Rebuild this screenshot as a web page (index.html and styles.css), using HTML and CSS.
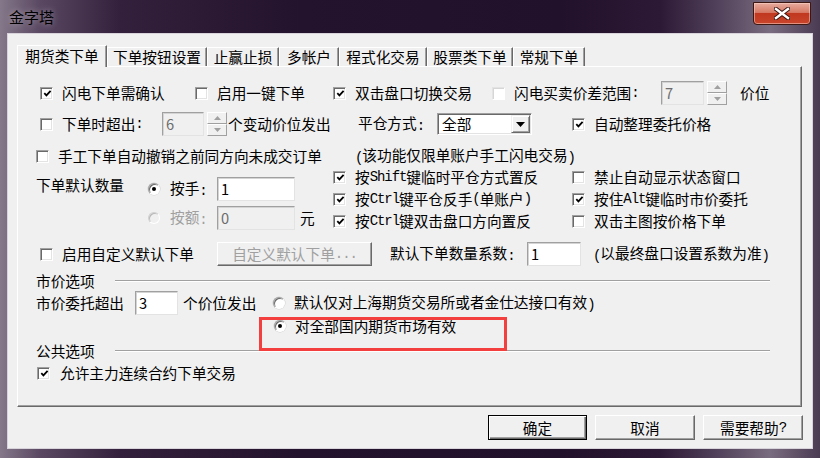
FILE: index.html
```html
<!DOCTYPE html>
<html lang="zh-CN">
<head>
  <meta charset="UTF-8" />
  <title>金字塔</title>
  <link rel="stylesheet" href="styles.css">
</head>
<body>
  <div class="window">
    <div class="titlebar">
      <span class="title">金字塔</span>
      <div class="close">
        <svg width="16" height="13" viewBox="0 0 16 13">
          <path d="M2 2 L14 11 M14 2 L2 11" stroke="#3a1410" stroke-width="4.4" stroke-linecap="square" fill="none"/>
          <path d="M2 2 L14 11 M14 2 L2 11" stroke="#fff" stroke-width="2.4" stroke-linecap="square" fill="none"/>
        </svg>
      </div>
    </div>

    <div class="client">
      <div class="tabs">
        <div class="tab active">期货类下单</div>
        <div class="tab">下单按钮设置</div>
        <div class="tab">止赢止损</div>
        <div class="tab">多帐户</div>
        <div class="tab">程式化交易</div>
        <div class="tab">股票类下单</div>
        <div class="tab">常规下单</div>
      </div>

      <div class="panel">
        <div class="row r1">
          <label class="chk w155"><span class="cb"><svg width="9" height="9" viewBox="0 0 9 9"><path d="M1.3 4.2 L3.4 6.4 L7.6 1.8" fill="none" stroke="#000" stroke-width="1.8"/></svg></span>闪电下单需确认</label>
          <label class="chk w138"><span class="cb"></span>启用一键下单</label>
          <label class="chk w159"><span class="cb"><svg width="9" height="9" viewBox="0 0 9 9"><path d="M1.3 4.2 L3.4 6.4 L7.6 1.8" fill="none" stroke="#000" stroke-width="1.8"/></svg></span>双击盘口切换交易</label>
          <label class="chk w169"><span class="cb lite"></span>闪电买卖价差范围<span class="en">:</span></label>
          <div class="spin">
            <span class="edit off w43">7</span>
            <span class="spinbtns">
              <span><svg width="7" height="4" viewBox="0 0 7 4"><path d="M0 4 L3.5 0 L7 4Z" fill="#a0a0a0"/></svg></span>
              <span><svg width="7" height="4" viewBox="0 0 7 4"><path d="M0 0 L3.5 4 L7 0Z" fill="#a0a0a0"/></svg></span>
            </span>
          </div>
          <span class="unit">价位</span>
        </div>

        <div class="row r2">
          <label class="chk w122"><span class="cb"></span>下单时超出<span class="en">:</span></label>
          <div class="spin w66">
            <span class="edit off w42">6</span>
            <span class="spinbtns">
              <span><svg width="7" height="4" viewBox="0 0 7 4"><path d="M0 4 L3.5 0 L7 4Z" fill="#a0a0a0"/></svg></span>
              <span><svg width="7" height="4" viewBox="0 0 7 4"><path d="M0 0 L3.5 4 L7 0Z" fill="#a0a0a0"/></svg></span>
            </span>
          </div>
          <span class="w130">个变动价位发出</span>
          <span class="w79">平仓方式<span class="en">:</span></span>
          <div class="combo">
            <span class="val">全部</span>
            <span class="drop"><svg width="9" height="5" viewBox="0 0 9 5"><path d="M0 0 L9 0 L4.5 5Z" fill="#000"/></svg></span>
          </div>
          <label class="chk ml40"><span class="cb"><svg width="9" height="9" viewBox="0 0 9 9"><path d="M1.3 4.2 L3.4 6.4 L7.6 1.8" fill="none" stroke="#000" stroke-width="1.8"/></svg></span>自动整理委托价格</label>
        </div>

        <div class="row r3">
          <label class="chk w319"><span class="cb"></span>手工下单自动撤销之前同方向未成交订单</label>
          <span><span class="en">(</span>该功能仅限单账户手工闪电交易<span class="en">)</span></span>
        </div>

        <div class="qty">
          <div class="qty-left">
            <span class="qty-label">下单默认数量</span>
            <div class="qty-opts">
              <div class="row h24">
                <span class="rd on"></span>
                <span class="w47">按手<span class="en">:</span></span>
                <span class="edit w78">1</span>
              </div>
              <div class="row h24 mt5">
                <span class="rd dis"></span>
                <span class="w47 grey">按额<span class="en">:</span></span>
                <span class="edit off w78">0</span>
                <span class="yuan">元</span>
              </div>
            </div>
          </div>
          <div class="qty-right">
            <div class="row h22">
              <label class="chk w239"><span class="cb"><svg width="9" height="9" viewBox="0 0 9 9"><path d="M1.3 4.2 L3.4 6.4 L7.6 1.8" fill="none" stroke="#000" stroke-width="1.8"/></svg></span>按<span class="en">Shift</span>键临时平仓方式置反</label>
              <label class="chk"><span class="cb"></span>禁止自动显示状态窗口</label>
            </div>
            <div class="row h22">
              <label class="chk w239"><span class="cb"><svg width="9" height="9" viewBox="0 0 9 9"><path d="M1.3 4.2 L3.4 6.4 L7.6 1.8" fill="none" stroke="#000" stroke-width="1.8"/></svg></span>按<span class="en">Ctrl</span>键平仓反手<span class="en">(</span>单账户<span class="en">)</span></label>
              <label class="chk"><span class="cb"><svg width="9" height="9" viewBox="0 0 9 9"><path d="M1.3 4.2 L3.4 6.4 L7.6 1.8" fill="none" stroke="#000" stroke-width="1.8"/></svg></span>按住<span class="en">Alt</span>键临时市价委托</label>
            </div>
            <div class="row h22">
              <label class="chk w239"><span class="cb"><svg width="9" height="9" viewBox="0 0 9 9"><path d="M1.3 4.2 L3.4 6.4 L7.6 1.8" fill="none" stroke="#000" stroke-width="1.8"/></svg></span>按<span class="en">Ctrl</span>键双击盘口方向置反</label>
              <label class="chk"><span class="cb"></span>双击主图按价格下单</label>
            </div>
          </div>
        </div>

        <div class="row r7">
          <label class="chk w177"><span class="cb"></span>启用自定义默认下单</label>
          <span class="btn dis w155">自定义默认下单<span class="en">...</span></span>
          <span class="w137 ml18">默认下单数量系数<span class="en">:</span></span>
          <span class="edit w54">1</span>
          <span class="ml12"><span class="en">(</span>以最终盘口设置系数为准<span class="en">)</span></span>
        </div>

        <div class="group g1">
          <span class="w79">市价选项</span>
          <span class="gline"></span>
        </div>

        <div class="row r8">
          <span class="w99">市价委托超出</span>
          <span class="edit w43">3</span>
          <span class="w90 ml5">个价位发出</span>
          <span class="rd tight"></span>
          <span>默认仅对上海期货交易所或者金仕达接口有效<span class="en">)</span></span>
        </div>

        <div class="row r9">
          <span class="rd on tight"></span>
          <span>对全部国内期货市场有效</span>
        </div>

        <div class="group g2">
          <span class="w79">公共选项</span>
          <span class="gline"></span>
        </div>

        <div class="row r10">
          <label class="chk"><span class="cb wide"><svg width="9" height="9" viewBox="0 0 9 9"><path d="M1.3 4.2 L3.4 6.4 L7.6 1.8" fill="none" stroke="#000" stroke-width="1.8"/></svg></span>允许主力连续合约下单交易</label>
        </div>
      </div>

      <div class="footer">
        <span class="btn def">确定</span>
        <span class="btn">取消</span>
        <span class="btn">需要帮助<span class="en">?</span></span>
      </div>
    </div>
  </div>

  <div class="mark"></div>
</body>
</html>
```

FILE: styles.css
```css
* {
  box-sizing: border-box;
}

html, body {
  margin: 0;
  padding: 0;
}

body {
  width: 820px;
  height: 458px;
  overflow: hidden;
  position: relative;
  font-family: "Noto Sans CJK SC", "Noto Sans CJK JP", sans-serif;
  font-size: 14.67px;
  line-height: 18px;
  color: #000;
  background: linear-gradient(90deg, #85788a 0, #5a4862 40px, #33203c 120px, #24132c 300px, #22112a 560px, #2c1936 660px, #5a4a62 730px, #7a6c80 770px, #4a3a52 820px);
}

/* half-width latin, same advance as the dialog font */
.en {
  font-family: "Liberation Mono", monospace;
  font-size: 14px;
  letter-spacing: -1.07px;
  vertical-align: -1px;
}

/* window frame */
.window {
  height: 458px;
  display: flex;
  flex-direction: column;
}

.titlebar {
  height: 34px;
  display: flex;
  justify-content: space-between;
  align-items: flex-start;
}

.title {
  margin: 8px 0 0 9px;
  font-size: 15px;
  text-shadow: 0 0 6px rgba(255, 255, 255, 0.45);
}

.close {
  width: 58px;
  height: 23px;
  margin: 2px 9px 0 0;
  border: 1px solid #3d1712;
  border-radius: 0 0 4px 4px;
  background: linear-gradient(#e7ab9d 0, #d67a66 45%, #c0381f 50%, #c9452b 100%);
  box-shadow: inset 0 0 0 1px rgba(255, 220, 210, 0.5);
  display: flex;
  align-items: center;
  justify-content: center;
}

.client {
  margin: 0 8px;
  height: 414px;
  background: #f0f0f0;
  padding: 11px 0 0 9px;
  box-shadow: 0 0 0 1px #d8d3da;
}

/* tabs */
.tabs {
  display: flex;
  align-items: flex-end;
  height: 21px;
  position: relative;
  z-index: 1;
}

.tab {
  height: 19px;
  line-height: 18px;
  text-align: center;
  white-space: nowrap;
  border-top: 1px solid #fff;
  border-left: 1px solid #fff;
  border-right: 1px solid #696969;
  box-shadow: inset -1px 0 #a0a0a0;
}

.tab.active {
  height: 22px;
  margin-bottom: -1px;
  padding-top: 1px;
  background: #f0f0f0;
}

.tab:nth-child(1) { width: 90px; }
.tab:nth-child(2) { width: 100px; }
.tab:nth-child(3) { width: 72px; }
.tab:nth-child(4) { width: 60px; }
.tab:nth-child(5) { width: 88px; }
.tab:nth-child(6) { width: 86px; }
.tab:nth-child(7) { width: 72px; }

.panel {
  width: 785px;
  height: 341px;
  border: 1px solid;
  border-color: #fff #696969 #696969 #fff;
  box-shadow: inset -1px -1px #a0a0a0;
}

/* rows */
.row {
  display: flex;
  align-items: center;
  white-space: nowrap;
}

.row > span,
.row > label {
  flex: none;
}

.r1 { height: 24px; margin-top: 14px; padding-left: 22px; }
.r2 { height: 24px; margin-top: 7px; padding-left: 22px; }
.r3 { height: 18px; margin-top: 11px; padding-left: 18px; }
.r7 { height: 24px; margin-top: 10px; padding-left: 22px; }
.r8 { height: 24px; margin-top: 1px; padding-left: 18px; }
.r9 { height: 18px; margin-top: 2px; padding-left: 256px; }
.r10 { height: 18px; margin-top: 4px; padding-left: 19px; }

.h22 { height: 22px; }
.h24 { height: 24px; }
.mt5 { margin-top: 5px; }
.ml5 { margin-left: 5px; }
.ml12 { margin-left: 12px; }
.ml18 { margin-left: 18px; }
.ml40 { margin-left: 40px; }

.w42 { width: 42px; }
.w43 { width: 43px; }
.w47 { width: 47px; }
.w54 { width: 54px; }
.w66 { width: 66px; }
.w78 { width: 78px; }
.w79 { width: 79px; }
.w90 { width: 90px; }
.w99 { width: 99px; }
.w122 { width: 122px; }
.w130 { width: 130px; }
.w137 { width: 137px; }
.w138 { width: 138px; }
.w155 { width: 155px; }
.w159 { width: 159px; }
.w169 { width: 169px; }
.w177 { width: 177px; }
.w239 { width: 239px; }
.w319 { width: 319px; }

.grey { color: #a0a0a0; }

/* checkbox */
.chk {
  display: flex;
  align-items: center;
  white-space: nowrap;
  flex: none;
}

.cb {
  width: 13px;
  height: 13px;
  flex: none;
  margin-right: 9px;
  background: #fff;
  border: 1px solid;
  border-color: #a0a0a0 #fff #fff #a0a0a0;
  box-shadow: inset 1px 1px #696969, inset -1px -1px #e3e3e3;
  display: flex;
  align-items: center;
  justify-content: center;
  padding: 1px 0 0 1px;
}

.cb.lite {
  border-color: #e3e3e3 #fff #fff #e3e3e3;
  box-shadow: inset 1px 1px #d6d6d6;
}

.cb.wide {
  margin-right: 10px;
}

/* radio */
.rd {
  width: 12px;
  height: 12px;
  flex: none;
  margin-right: 10px;
  border-radius: 50%;
  background: #fff;
  border: 1px solid;
  border-color: #a0a0a0 #fff #fff #a0a0a0;
  box-shadow: inset 1px 1px #696969, 0 0 0 0.5px #d0d0d0;
  position: relative;
}

.rd.tight {
  margin-right: 9px;
}

.rd.on::after {
  content: "";
  position: absolute;
  left: 3px;
  top: 3px;
  width: 4px;
  height: 4px;
  border-radius: 50%;
  background: #000;
}

.rd.dis {
  background: #f0f0f0;
  border-color: #d0d0d0 #fff #fff #d0d0d0;
  box-shadow: inset 1px 1px #b8b8b8;
}

/* edit boxes */
.edit {
  height: 24px;
  line-height: 22px;
  padding-left: 3px;
  background: #fff;
  border: 1px solid;
  border-color: #a0a0a0 #e3e3e3 #e3e3e3 #a0a0a0;
  box-shadow: inset 1px 1px #d4d4d4;
  flex: none;
}

.edit.off {
  background: #f0f0f0;
  color: #6d6d6d;
}

.spin {
  display: flex;
  align-items: center;
  flex: none;
}

.spinbtns {
  display: flex;
  flex-direction: column;
  width: 20px;
  height: 24px;
  margin-left: 3px;
}

.spinbtns span {
  flex: 1;
  display: flex;
  align-items: center;
  justify-content: center;
  background: #f0f0f0;
  border: 1px solid;
  border-color: #fff #a0a0a0 #a0a0a0 #fff;
}

.unit {
  margin-left: 13px;
}

.yuan {
  margin-left: 5px;
}

/* combo */
.combo {
  width: 95px;
  height: 22px;
  flex: none;
  display: flex;
  justify-content: space-between;
  background: #fff;
  border: 1px solid;
  border-color: #a0a0a0 #fff #fff #a0a0a0;
  box-shadow: inset 1px 1px #696969, inset -1px -1px #e3e3e3;
  padding: 1px;
}

.combo .val {
  padding-left: 3px;
  line-height: 18px;
}

.combo .drop {
  width: 19px;
  height: 18px;
  display: flex;
  align-items: center;
  justify-content: center;
  background: #f0f0f0;
  border: 1px solid;
  border-color: #f0f0f0 #696969 #696969 #f0f0f0;
  box-shadow: inset 1px 1px #fff, inset -1px -1px #a0a0a0;
}

/* qty block */
.qty {
  display: flex;
  margin-top: 1px;
  padding-left: 18px;
}

.qty-left {
  width: 297px;
  display: flex;
}

.qty-label {
  width: 112px;
  margin-top: 10px;
  height: 18px;
}

.qty-opts {
  padding-top: 11px;
}

/* group headers */
.group {
  display: flex;
  align-items: center;
  height: 18px;
  padding-left: 18px;
}

.g1 { margin-top: 6px; }
.g2 { margin-top: 7px; }

.gline {
  width: 655px;
  height: 2px;
  border-top: 1px solid #a0a0a0;
  border-bottom: 1px solid #fff;
  margin-top: -1px;
}

/* push buttons */
.btn {
  height: 25px;
  display: flex;
  align-items: center;
  justify-content: center;
  background: #f0f0f0;
  border: 1px solid;
  border-color: #fff #696969 #696969 #fff;
  box-shadow: inset -1px -1px #a0a0a0;
  white-space: nowrap;
}

.btn.dis {
  height: 24px;
  color: #a0a0a0;
}

.footer {
  width: 786px;
  margin-top: 8px;
  display: flex;
  justify-content: flex-end;
}

.footer .btn {
  width: 100px;
  margin-left: 8px;
}

.footer .btn.def {
  width: 99px;
  border-color: #000;
  box-shadow: inset 1px 1px #fff, inset -1px -1px #696969, inset -2px -2px #a0a0a0;
}

/* red annotation box */
.mark {
  position: absolute;
  left: 259px;
  top: 317px;
  width: 248px;
  height: 34px;
  border: 3px solid #f43f3f;
}
```
